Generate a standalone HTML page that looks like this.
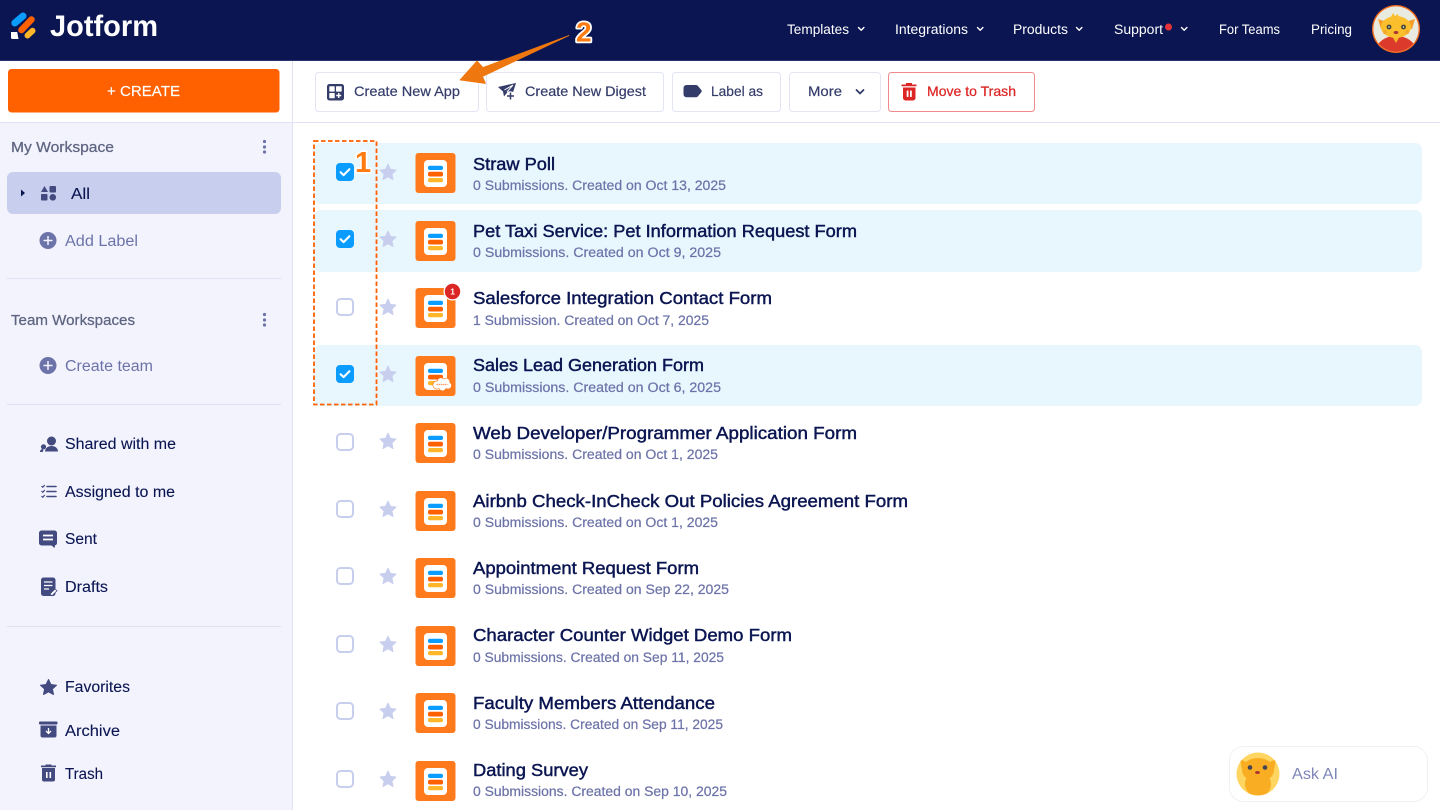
<!DOCTYPE html>
<html lang="en"><head><meta charset="utf-8"><title>Jotform</title>
<style>
html,body{margin:0;padding:0;background:#fff;width:1440px;height:810px;overflow:hidden}
svg{display:block}
text{font-family:"Liberation Sans",sans-serif}
.nav{font-size:13.5px;fill:#fff}
.t{font-size:17.5px;fill:#0a1551;stroke:#0a1551;stroke-width:.45px}
.s{font-size:13.5px;fill:#6c73a8;stroke:#6c73a8;stroke-width:.22px}
.b{font-size:14px;fill:#343c6a;stroke:#343c6a;stroke-width:.2px}
.m{font-size:15.5px;fill:#0a1551;stroke:#0a1551;stroke-width:.1px}
.h{font-size:14.5px;fill:#5e6580;stroke:#5e6580;stroke-width:.25px}
.g{font-size:15.5px;fill:#6c73a8}
.ch{fill:none;stroke:#fff;stroke-width:1.4;stroke-linecap:round;stroke-linejoin:round}
.ic{fill:#434a80}
</style></head><body>
<svg width="1440" height="810" viewBox="0 0 1440 810" xmlns="http://www.w3.org/2000/svg">
<defs>
<symbol id="form" viewBox="0 0 40 40" width="40" height="40" overflow="visible">
<rect width="40" height="40" rx="3" fill="#ff7a1c"/>
<rect x="8.500" y="7" width="23" height="27" rx="4" fill="#fff"/>
<rect x="12.500" y="12.700" width="15" height="4.300" rx="2" fill="#0a9cff"/>
<rect x="12.500" y="18.700" width="15" height="4.800" rx="2" fill="#ff6100"/>
<rect x="12.500" y="25" width="15" height="4.300" rx="2" fill="#ffb629"/>
</symbol>
<symbol id="star" viewBox="0 0 20 20" width="18" height="18">
<path d="M10 1.200l2.700 5.800 6.300.8-4.600 4.300 1.200 6.300L10 15.300l-5.600 3.100 1.200-6.300L1 7.800l6.300-.8z" fill="#c8ceed" stroke="#c8ceed" stroke-linejoin="round"/>
</symbol>
<symbol id="on" viewBox="0 0 18 18" width="18" height="18">
<rect width="18" height="18" rx="4" fill="#0a9cff"/>
<path d="M4.600 9.200l3 2.900 5.800-5.800" fill="none" stroke="#fff" stroke-width="2.100" stroke-linecap="round" stroke-linejoin="round"/>
</symbol>
<symbol id="off" viewBox="0 0 18 18" width="18" height="18">
<rect x="1" y="1" width="16" height="16" rx="3.500" fill="#fff" stroke="#c8ceed" stroke-width="2"/>
</symbol>
<clipPath id="ai"><circle cx="1258" cy="774" r="21.500"/></clipPath>
<clipPath id="av"><circle cx="1396" cy="29" r="22.600"/></clipPath>
</defs>

<!-- header -->
<rect width="1440" height="61" fill="#0a1551"/>
<rect y="60" width="1440" height="1" fill="#2b3370"/>
<g stroke-linecap="round" fill="none">
<path d="M14.800 23L23 16" stroke="#0a9cff" stroke-width="7"/>
<path d="M21.500 30L31.500 19.500" stroke="#ff6100" stroke-width="6.500"/>
<path d="M27.500 35.500L32.500 30.800" stroke="#ffb629" stroke-width="6"/>
</g>
<path d="M11 32h6.200l1.300 7H12.500a1.500 1.500 0 0 1-1.500-1.500z" fill="#fff"/>
<text x="50" y="36" font-size="30" font-weight="700" fill="#fff" textLength="108" lengthAdjust="spacingAndGlyphs">Jotform</text>

<text class="nav" x="787" y="34" textLength="62" lengthAdjust="spacingAndGlyphs">Templates</text>
<path class="ch" d="M858.500 27.500l2.700 2.700 2.700-2.700"/>
<text class="nav" x="895" y="34" textLength="73" lengthAdjust="spacingAndGlyphs">Integrations</text>
<path class="ch" d="M977.500 27.500l2.700 2.700 2.700-2.700"/>
<text class="nav" x="1013" y="34" textLength="55" lengthAdjust="spacingAndGlyphs">Products</text>
<path class="ch" d="M1076.500 27.500l2.700 2.700 2.700-2.700"/>
<text class="nav" x="1114" y="34" textLength="49" lengthAdjust="spacingAndGlyphs">Support</text>
<circle cx="1168.500" cy="27" r="3.500" fill="#e5333a"/>
<path class="ch" d="M1181.500 27.500l2.700 2.700 2.700-2.700"/>
<text class="nav" x="1219" y="34" textLength="61" lengthAdjust="spacingAndGlyphs">For Teams</text>
<text class="nav" x="1311" y="34" textLength="41" lengthAdjust="spacingAndGlyphs">Pricing</text>

<!-- avatar -->
<circle cx="1396" cy="29" r="24" fill="#f2691c"/>
<circle cx="1396" cy="29" r="22.600" fill="#e9ebe0"/>
<g clip-path="url(#av)">
<path d="M1374 56c1-12 9-20 22-20s21 8 22 20z" fill="#dc3a2a"/>
<path d="M1392 36h8l-4 7z" fill="#f5b62a"/>
<path d="M1378 19l9 3 18 0 10-3-3 10h-31z" fill="#f59c2a"/>
<path d="M1391 17l2-4 2 3 3-2 1 4z" fill="#fbbf2d"/>
<ellipse cx="1396" cy="27" rx="15" ry="11" fill="#fbbf2d"/>
</g>
<circle cx="1389" cy="27" r="2.400" fill="#443"/><circle cx="1403.500" cy="27" r="2.400" fill="#443"/>
<circle cx="1389" cy="27" r=".8" fill="#fff"/><circle cx="1403.500" cy="27" r=".8" fill="#fff"/>
<ellipse cx="1396" cy="32.500" rx="2.400" ry="1.500" fill="#a33"/>
<circle cx="1385" cy="32" r="2" fill="#f5a92a"/><circle cx="1407" cy="32" r="2" fill="#f5a92a"/>

<!-- toolbar -->
<rect y="122" width="1440" height="1" fill="#dfe1f4"/>
<g fill="#fff" stroke="#e3e5f5">
<rect x="315.500" y="72.500" width="163" height="39" rx="3"/>
<rect x="486.500" y="72.500" width="177" height="39" rx="3"/>
<rect x="672.500" y="72.500" width="108" height="39" rx="3"/>
<rect x="789.500" y="72.500" width="91" height="39" rx="3"/>
</g>
<rect x="888.500" y="72.500" width="146" height="39" rx="3" fill="#fff" stroke="#ef8a8a"/>
<rect x="327" y="84" width="17" height="16.500" rx="2.500" fill="#343c6a"/>
<g fill="#fff"><rect x="329.300" y="86.200" width="5.400" height="5.400" rx=".6"/><rect x="336" y="86.200" width="5.700" height="5.400" rx=".6"/><rect x="329.300" y="93" width="5.400" height="5.300" rx=".6"/><path d="M338 93h1.400v1.800h1.800v1.400h-1.800V98H338v-1.800h-1.800v-1.400h1.800z"/></g>
<text class="b" x="354" y="96" textLength="106" lengthAdjust="spacingAndGlyphs">Create New App</text>
<path d="M498 87l18-4-4.500 14-5-3.500-2.500 3-1-5z" fill="#343c6a"/>
<path d="M504.500 90l8.500-5-6 7" stroke="#fff" fill="none"/>
<circle cx="510.500" cy="96" r="4.800" fill="#fff"/>
<path d="M510.500 92.500v7M507 96h7" stroke="#343c6a" stroke-width="1.500" fill="none"/>
<text class="b" x="525" y="96" textLength="121" lengthAdjust="spacingAndGlyphs">Create New Digest</text>
<path d="M684 88a2.500 2.500 0 0 1 2.500-2.500h9.500a2 2 0 0 1 1.500.7l3.500 4.300a1 1 0 0 1 0 1.300l-3.500 4.300a2 2 0 0 1-1.500.7h-9.500a2.500 2.500 0 0 1-2.500-2.500z" fill="#343c6a" stroke="#343c6a" stroke-linejoin="round"/>
<text class="b" x="711" y="96" textLength="52" lengthAdjust="spacingAndGlyphs">Label as</text>
<text class="b" x="808" y="96" textLength="34" lengthAdjust="spacingAndGlyphs">More</text>
<path d="M856.500 90l3.500 3.500 3.500-3.500" fill="none" stroke="#343c6a" stroke-width="1.800" stroke-linecap="round" stroke-linejoin="round"/>
<path d="M901.500 84.500h15v1.800h-15zM906 83h6v1.800h-6zM903 87.500h12.500V98a2.500 2.500 0 0 1-2.500 2.500h-7.500A2.500 2.500 0 0 1 903 98z" fill="#dc2626"/>
<rect x="906.700" y="90.500" width="1.800" height="6.500" rx=".5" fill="#fff"/><rect x="910" y="90.500" width="1.800" height="6.500" rx=".5" fill="#fff"/>
<text x="927" y="96" font-size="14" fill="#dc2626" stroke="#dc2626" stroke-width=".25" textLength="89" lengthAdjust="spacingAndGlyphs">Move to Trash</text>

<!-- sidebar -->
<rect y="123" width="292" height="687" fill="#f3f3fe"/>
<rect x="292" y="61" width="1" height="749" fill="#dfe1f4"/>
<rect x="8" y="69" width="271.500" height="43.500" rx="3.500" fill="#ff6100"/>
<text x="107" y="96" font-size="15" fill="#fff" stroke="#fff" stroke-width=".15" textLength="73" lengthAdjust="spacingAndGlyphs">+ CREATE</text>
<text class="h" x="11" y="152" textLength="103" lengthAdjust="spacingAndGlyphs">My Workspace</text>
<g fill="#6c73a8"><circle cx="264.500" cy="141.500" r="1.600"/><circle cx="264.500" cy="147" r="1.600"/><circle cx="264.500" cy="152" r="1.600"/></g>
<rect x="7" y="172" width="274" height="42" rx="6" fill="#c8ceed"/>
<path d="M21 189.500l4 3.500-4 3.500z" fill="#0a1551"/>
<path d="M44.500 186l3.500 6h-7z" fill="#434a80"/><rect x="49.500" y="186" width="6.500" height="6.500" rx="1" fill="#434a80"/>
<rect x="41" y="194" width="6.500" height="6.500" rx="1" fill="#434a80"/><circle cx="52.800" cy="197.300" r="3.300" fill="#434a80"/>
<text class="m" x="71" y="199" textLength="19" lengthAdjust="spacingAndGlyphs">All</text>
<circle cx="48" cy="240.500" r="8.500" fill="#6c73a8"/><path d="M48 236v9M43.500 240.500h9" stroke="#f3f3fe" stroke-width="1.500"/>
<text class="g" x="65" y="246" textLength="73" lengthAdjust="spacingAndGlyphs">Add Label</text>
<rect x="7" y="278" width="274" height="1" fill="#dfe1f4"/>
<text class="h" x="11" y="325" textLength="124" lengthAdjust="spacingAndGlyphs">Team Workspaces</text>
<g fill="#6c73a8"><circle cx="264.500" cy="314.500" r="1.600"/><circle cx="264.500" cy="320" r="1.600"/><circle cx="264.500" cy="325" r="1.600"/></g>
<circle cx="48" cy="365.500" r="8.500" fill="#6c73a8"/><path d="M48 361v9M43.500 365.500h9" stroke="#f3f3fe" stroke-width="1.500"/>
<text class="g" x="65" y="371" textLength="88" lengthAdjust="spacingAndGlyphs">Create team</text>
<rect x="7" y="404" width="274" height="1" fill="#dfe1f4"/>

<circle cx="51.500" cy="441" r="4.500" class="ic"/><path d="M45 451.500c.3-3.800 3-5.500 6.500-5.500s6.200 1.700 6.500 5.500z" class="ic"/>
<circle cx="43.500" cy="446.800" r="2.600" class="ic"/><path d="M40 452c0-2 1.200-3 3.500-3l-.7 3z" class="ic"/>
<text class="m" x="65" y="449" textLength="111" lengthAdjust="spacingAndGlyphs">Shared with me</text>

<path d="M47 486.500h9M47 491.500h9M47 496.500h9" stroke="#434a80" stroke-width="1.600" stroke-linecap="round"/>
<path d="M41.500 486l1.300 1.300 2-2.300M41.500 491l1.300 1.300 2-2.300M41.500 496l1.300 1.300 2-2.300" fill="none" stroke="#434a80" stroke-width="1.200"/>
<text class="m" x="65" y="497" textLength="110" lengthAdjust="spacingAndGlyphs">Assigned to me</text>

<path d="M39 533a2.500 2.500 0 0 1 2.500-2.500h13A2.500 2.500 0 0 1 57 533v10a2.500 2.500 0 0 1-2.500 2.500H55l-.5 2.500-3-2.500h-10A2.500 2.500 0 0 1 39 543z" class="ic"/>
<path d="M43 535.500h10M43 539.500h10" stroke="#fff" stroke-width="1.800"/>
<text class="m" x="65" y="544" textLength="32" lengthAdjust="spacingAndGlyphs">Sent</text>

<rect x="41" y="577.500" width="14.500" height="18.500" rx="2.500" class="ic"/>
<path d="M44 582h8.500M44 585.500h8.500M44 589h5" stroke="#fff" stroke-width="1.200"/>
<path d="M50 594l5-5 2 1.800-5 5z" fill="#fff" stroke="#434a80" stroke-width=".8"/>
<text class="m" x="65" y="592" textLength="43" lengthAdjust="spacingAndGlyphs">Drafts</text>
<rect x="7" y="626" width="274" height="1" fill="#dfe1f4"/>

<path d="M48.500 679.500l2.400 5 5.600.7-4.100 3.800 1.100 5.500-5-2.700-5 2.700 1.100-5.500-4.100-3.800 5.600-.7z" class="ic" stroke="#434a80" stroke-linejoin="round"/>
<text class="m" x="65" y="692" textLength="65" lengthAdjust="spacingAndGlyphs">Favorites</text>

<rect x="39" y="721.500" width="18.500" height="3" rx="1" class="ic"/>
<path d="M40.500 725.500h16v10a2 2 0 0 1-2 2h-12a2 2 0 0 1-2-2z" class="ic"/>
<path d="M48.500 728v5M46 731l2.500 2.500L51 731" stroke="#fff" fill="none" stroke-width="1.300"/>
<text class="m" x="65" y="736" textLength="55" lengthAdjust="spacingAndGlyphs">Archive</text>

<path d="M41 765.500h15v1.700H41zM45.500 764.500h6v1.500h-6zM42 768h13v11.500a2 2 0 0 1-2 2H44a2 2 0 0 1-2-2z" class="ic"/>
<rect x="46" y="772" width="1.600" height="6" fill="#fff"/><rect x="49.500" y="772" width="1.600" height="6" fill="#fff"/>
<text class="m" x="65" y="779" textLength="38" lengthAdjust="spacingAndGlyphs">Trash</text>

<!-- highlights -->
<g fill="#e8f6fe">
<rect x="314" y="143" width="1108" height="61" rx="7"/>
<rect x="314" y="210" width="1108" height="62" rx="7"/>
<rect x="314" y="345" width="1108" height="61" rx="7"/>
</g>

<!-- rows -->
<use href="#on" x="336" y="163"/><use href="#star" x="379" y="163"/><use href="#form" x="415.500" y="153"/>
<text class="t" x="473" y="170" textLength="82" lengthAdjust="spacingAndGlyphs">Straw Poll</text>
<text class="s" x="473" y="190" textLength="253" lengthAdjust="spacingAndGlyphs">0 Submissions. Created on Oct 13, 2025</text>

<use href="#on" x="336" y="230"/><use href="#star" x="379" y="230"/><use href="#form" x="415.500" y="221"/>
<text class="t" x="473" y="237" textLength="384" lengthAdjust="spacingAndGlyphs">Pet Taxi Service: Pet Information Request Form</text>
<text class="s" x="473" y="257" textLength="248" lengthAdjust="spacingAndGlyphs">0 Submissions. Created on Oct 9, 2025</text>

<use href="#off" x="336" y="298"/><use href="#star" x="379" y="298"/><use href="#form" x="415.500" y="288"/>
<circle cx="452.500" cy="291.500" r="9" fill="#fff"/><circle cx="452.500" cy="291.500" r="7.700" fill="#dc2626"/>
<text x="450.300" y="294.500" font-size="8.500" font-weight="700" fill="#fff">1</text>
<text class="t" x="473" y="304" textLength="299" lengthAdjust="spacingAndGlyphs">Salesforce Integration Contact Form</text>
<text class="s" x="473" y="325" textLength="236" lengthAdjust="spacingAndGlyphs">1 Submission. Created on Oct 7, 2025</text>

<use href="#on" x="336" y="365"/><use href="#star" x="379" y="365"/><use href="#form" x="415.500" y="356"/>
<g stroke="#ff7a1c" stroke-width="1.400" fill="#ff7a1c">
<circle cx="437" cy="385" r="3.800"/><circle cx="441" cy="381.500" r="3.400"/><circle cx="446" cy="382" r="3.600"/><circle cx="448" cy="385.500" r="3.200"/><circle cx="442.500" cy="387" r="3.500"/>
</g>
<g fill="#fff">
<circle cx="437" cy="385" r="3.800"/><circle cx="441" cy="381.500" r="3.400"/><circle cx="446" cy="382" r="3.600"/><circle cx="448" cy="385.500" r="3.200"/><circle cx="442.500" cy="387" r="3.500"/>
</g>
<path d="M436.500 384.500h11" stroke="#ff9a5a" stroke-width="1.300" stroke-dasharray="1.500 .6"/>
<text class="t" x="473" y="371" textLength="231" lengthAdjust="spacingAndGlyphs">Sales Lead Generation Form</text>
<text class="s" x="473" y="392" textLength="248" lengthAdjust="spacingAndGlyphs">0 Submissions. Created on Oct 6, 2025</text>

<use href="#off" x="336" y="433"/><use href="#star" x="379" y="432"/><use href="#form" x="415.500" y="423"/>
<text class="t" x="473" y="439" textLength="384" lengthAdjust="spacingAndGlyphs">Web Developer/Programmer Application Form</text>
<text class="s" x="473" y="459" textLength="245" lengthAdjust="spacingAndGlyphs">0 Submissions. Created on Oct 1, 2025</text>

<use href="#off" x="336" y="500"/><use href="#star" x="379" y="500"/><use href="#form" x="415.500" y="491"/>
<text class="t" x="473" y="507" textLength="435" lengthAdjust="spacingAndGlyphs">Airbnb Check-InCheck Out Policies Agreement Form</text>
<text class="s" x="473" y="527" textLength="245" lengthAdjust="spacingAndGlyphs">0 Submissions. Created on Oct 1, 2025</text>

<use href="#off" x="336" y="567"/><use href="#star" x="379" y="567"/><use href="#form" x="415.500" y="558"/>
<text class="t" x="473" y="574" textLength="226" lengthAdjust="spacingAndGlyphs">Appointment Request Form</text>
<text class="s" x="473" y="594" textLength="256" lengthAdjust="spacingAndGlyphs">0 Submissions. Created on Sep 22, 2025</text>

<use href="#off" x="336" y="635"/><use href="#star" x="379" y="635"/><use href="#form" x="415.500" y="626"/>
<text class="t" x="473" y="641" textLength="319" lengthAdjust="spacingAndGlyphs">Character Counter Widget Demo Form</text>
<text class="s" x="473" y="662" textLength="251" lengthAdjust="spacingAndGlyphs">0 Submissions. Created on Sep 11, 2025</text>

<use href="#off" x="336" y="702"/><use href="#star" x="379" y="702"/><use href="#form" x="415.500" y="693"/>
<text class="t" x="473" y="709" textLength="242" lengthAdjust="spacingAndGlyphs">Faculty Members Attendance</text>
<text class="s" x="473" y="729" textLength="250" lengthAdjust="spacingAndGlyphs">0 Submissions. Created on Sep 11, 2025</text>

<use href="#off" x="336" y="770"/><use href="#star" x="379" y="770"/><use href="#form" x="415.500" y="761"/>
<text class="t" x="473" y="776" textLength="115" lengthAdjust="spacingAndGlyphs">Dating Survey</text>
<text class="s" x="473" y="796" textLength="254" lengthAdjust="spacingAndGlyphs">0 Submissions. Created on Sep 10, 2025</text>

<!-- annotations -->
<rect x="314" y="141" width="62.500" height="263.500" fill="none" stroke="#ff6100" stroke-width="1.800" stroke-dasharray="4.500 2.500"/>
<text x="355" y="172" font-size="29" font-weight="700" fill="#fff" stroke="#fff" stroke-width="3.500" stroke-linejoin="round">1</text>
<text x="355" y="172" font-size="29" font-weight="700" fill="#ff7a0f">1</text>
<path d="M569 35.500L483 67.500 477 61 460 80l25.500 3.500-3-7z" fill="#ee770f" stroke="#ee770f" stroke-width=".8" stroke-linejoin="round"/>
<text x="576" y="41.500" font-size="28" font-weight="700" fill="#fff" stroke="#fff" stroke-width="3.500" stroke-linejoin="round">2</text>
<text x="576" y="41.500" font-size="28" font-weight="700" fill="#ff7a0f">2</text>

<!-- Ask AI -->
<rect x="1229.500" y="746.500" width="198" height="55" rx="14" fill="#fff" stroke="#f1f1f5"/>
<circle cx="1258" cy="774" r="21.500" fill="#ffd561"/>
<g clip-path="url(#ai)" fill="#f9ad22">
<path d="M1240 759l8 4h20l8-4-2 11h-32z"/>
<ellipse cx="1258" cy="770" rx="16" ry="12"/>
<ellipse cx="1258" cy="784" rx="13" ry="13"/>
</g>
<circle cx="1250" cy="767.500" r="2.300" fill="#445"/><circle cx="1265" cy="767.500" r="2.300" fill="#445"/>
<ellipse cx="1257.500" cy="772.500" rx="2.500" ry="1.500" fill="#a33"/>
<text x="1292" y="779" font-size="15.500" fill="#7f86b8" textLength="46" lengthAdjust="spacingAndGlyphs">Ask AI</text>
</svg>
</body></html>
